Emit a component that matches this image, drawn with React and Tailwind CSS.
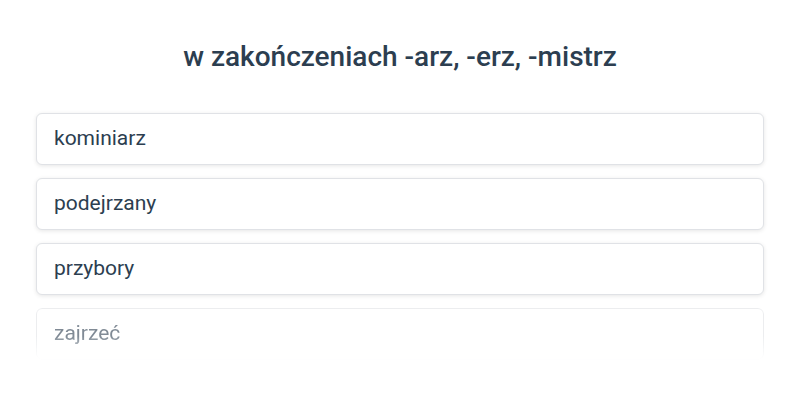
import React from "react";

const words = ["kominiarz", "podejrzany", "przybory", "zajrzeć"];

export default function App() {
  return (
    <div className="w-[800px] h-[400px] bg-white overflow-hidden font-['Roboto',sans-serif]">
      <h1 className="pt-[39px] text-center text-[28px] leading-[36px] font-medium text-[#2c3e50]">
        w zakończeniach -arz, -erz, -mistrz
      </h1>
      <div className="mt-[38px] px-[36px] flex flex-col gap-[13px]">
        {words.map((w, i) => (
          <div
            key={w}
            className={
              "h-[52px] flex items-center px-[17px] bg-white border border-[#e0e2e6] rounded-[6px] shadow-[0_1px_4px_rgba(0,0,0,0.1)] text-[21px] text-[#2c3e50] " +
              (i === words.length - 1 ? "opacity-60 [mask-image:linear-gradient(to_bottom,black_55%,transparent)]" : "")
            }
          >
            {w}
          </div>
        ))}
      </div>
    </div>
  );
}
